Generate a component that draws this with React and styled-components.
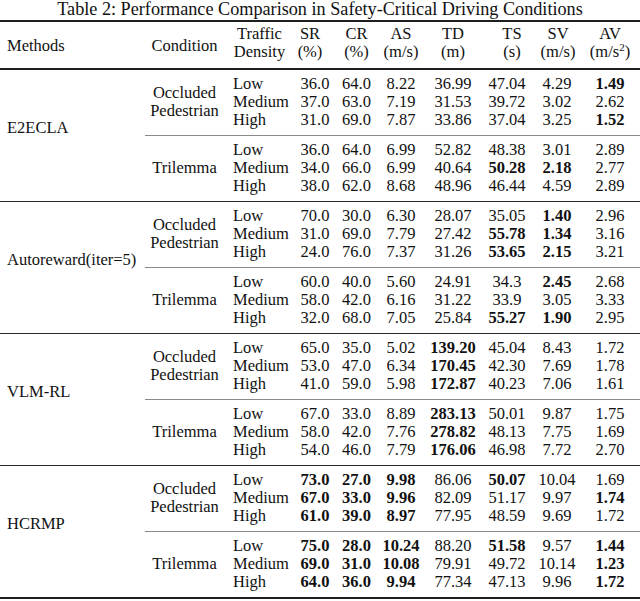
import React from "react";
import styled, { createGlobalStyle } from "styled-components";

const GlobalStyle = createGlobalStyle`
  html, body {
    margin: 0;
    padding: 0;
    background: #ffffff;
  }
  body {
    font-family: "Liberation Serif", "Times New Roman", serif;
    font-size: 16.5px;
    color: #111;
  }
`;

// column widths, shared by the header and the data rows
const METRIC_COLS = "40px 43px 46px 58px 50px 50px 56px";
const ROW_COLS = `71px ${METRIC_COLS}`;

const DATA = [
  {
    method: "E2ECLA",
    groups: [
      {
        condition: ["Occluded", "Pedestrian"],
        rows: [
          ["Low", "36.0", "64.0", "8.22", "36.99", "47.04", "4.29", "*1.49"],
          ["Medium", "37.0", "63.0", "7.19", "31.53", "39.72", "3.02", "2.62"],
          ["High", "31.0", "69.0", "7.87", "33.86", "37.04", "3.25", "*1.52"],
        ],
      },
      {
        condition: ["Trilemma"],
        rows: [
          ["Low", "36.0", "64.0", "6.99", "52.82", "48.38", "3.01", "2.89"],
          ["Medium", "34.0", "66.0", "6.99", "40.64", "*50.28", "*2.18", "2.77"],
          ["High", "38.0", "62.0", "8.68", "48.96", "46.44", "4.59", "2.89"],
        ],
      },
    ],
  },
  {
    method: "Autoreward(iter=5)",
    groups: [
      {
        condition: ["Occluded", "Pedestrian"],
        rows: [
          ["Low", "70.0", "30.0", "6.30", "28.07", "35.05", "*1.40", "2.96"],
          ["Medium", "31.0", "69.0", "7.79", "27.42", "*55.78", "*1.34", "3.16"],
          ["High", "24.0", "76.0", "7.37", "31.26", "*53.65", "*2.15", "3.21"],
        ],
      },
      {
        condition: ["Trilemma"],
        rows: [
          ["Low", "60.0", "40.0", "5.60", "24.91", "34.3", "*2.45", "2.68"],
          ["Medium", "58.0", "42.0", "6.16", "31.22", "33.9", "3.05", "3.33"],
          ["High", "32.0", "68.0", "7.05", "25.84", "*55.27", "*1.90", "2.95"],
        ],
      },
    ],
  },
  {
    method: "VLM-RL",
    groups: [
      {
        condition: ["Occluded", "Pedestrian"],
        rows: [
          ["Low", "65.0", "35.0", "5.02", "*139.20", "45.04", "8.43", "1.72"],
          ["Medium", "53.0", "47.0", "6.34", "*170.45", "42.30", "7.69", "1.78"],
          ["High", "41.0", "59.0", "5.98", "*172.87", "40.23", "7.06", "1.61"],
        ],
      },
      {
        condition: ["Trilemma"],
        rows: [
          ["Low", "67.0", "33.0", "8.89", "*283.13", "50.01", "9.87", "1.75"],
          ["Medium", "58.0", "42.0", "7.76", "*278.82", "48.13", "7.75", "1.69"],
          ["High", "54.0", "46.0", "7.79", "*176.06", "46.98", "7.72", "2.70"],
        ],
      },
    ],
  },
  {
    method: "HCRMP",
    groups: [
      {
        condition: ["Occluded", "Pedestrian"],
        rows: [
          ["Low", "*73.0", "*27.0", "*9.98", "86.06", "*50.07", "10.04", "1.69"],
          ["Medium", "*67.0", "*33.0", "*9.96", "82.09", "51.17", "9.97", "*1.74"],
          ["High", "*61.0", "*39.0", "*8.97", "77.95", "48.59", "9.69", "1.72"],
        ],
      },
      {
        condition: ["Trilemma"],
        rows: [
          ["Low", "*75.0", "*28.0", "*10.24", "88.20", "*51.58", "9.57", "*1.44"],
          ["Medium", "*69.0", "*31.0", "*10.08", "79.91", "49.72", "10.14", "*1.23"],
          ["High", "*64.0", "*36.0", "*9.94", "77.34", "47.13", "9.96", "*1.72"],
        ],
      },
    ],
  },
];

// name, unit, small horizontal nudge of the header text
const HEADERS = [
  ["SR", "(%)", -5],
  ["CR", "(%)", 0],
  ["AS", "(m/s)", 0],
  ["TD", "(m)", 0],
  ["TS", "(s)", 5],
  ["SV", "(m/s)", 1],
  ["AV", <>(m/s<sup>2</sup>)</>, 0],
];

const App = () => {
  return (
    <>
      <GlobalStyle />
      <Page>
        <Caption>
          Table 2: Performance Comparison in Safety-Critical Driving Conditions
        </Caption>
        <Table>
          <HeadRow>
            <HeadCell $single $align="left">Methods</HeadCell>
            <HeadCell $single>Condition</HeadCell>
            <HeadCell>
              Traffic
              <br />
              Density
            </HeadCell>
            {HEADERS.map(([name, unit, shift]) => (
              <HeadCell key={name} $shift={shift}>
                {name}
                <br />
                {unit}
              </HeadCell>
            ))}
          </HeadRow>

          {DATA.map((block, i) => (
            <MethodBlock key={block.method} $last={i === DATA.length - 1}>
              <MethodName>{block.method}</MethodName>
              <Conditions>
                {block.groups.map((group, g) => (
                  <CondGroup key={g} $divider={g > 0}>
                    <CondName>
                      {group.condition.map((line) => (
                        <span key={line}>{line}</span>
                      ))}
                    </CondName>
                    <Rows>
                      {group.rows.map(([density, ...values]) => (
                        <DataRow key={density}>
                          <Density>{density}</Density>
                          {values.map((v, k) => (
                            <Value key={k} $bold={v.startsWith("*")}>
                              {v.replace("*", "")}
                            </Value>
                          ))}
                        </DataRow>
                      ))}
                    </Rows>
                  </CondGroup>
                ))}
              </Conditions>
            </MethodBlock>
          ))}
        </Table>
      </Page>
    </>
  );
};

export default App;

const Page = styled.div`
  width: 640px;
  height: 601px;
  overflow: hidden;
  background: #fff;
`;

const Caption = styled.div`
  height: 18px;
  line-height: 18px;
  margin-bottom: 2px;
  font-size: 18.2px;
  text-align: center;
  white-space: nowrap;
`;

const Table = styled.div`
  border-top: 2px solid #1e1e1e;
`;

const HeadRow = styled.div`
  display: grid;
  grid-template-columns: 145px 79px ${ROW_COLS};
  height: 48px;
  padding-top: 3px;
  box-sizing: border-box;
  border-bottom: 2px solid #1e1e1e;
  line-height: 18.3px;
`;

const HeadCell = styled.div`
  text-align: ${({ $align }) => $align || "center"};
  padding-top: ${({ $single }) => ($single ? "12px" : "0")};
  padding-left: ${({ $align }) => ($align === "left" ? "7px" : "0")};
  transform: translateX(${({ $shift }) => $shift || 0}px);
  white-space: nowrap;

  sup {
    font-size: 11px;
    line-height: 0;
    vertical-align: 6px;
  }
`;

const MethodBlock = styled.div`
  display: flex;
  border-bottom: ${({ $last }) =>
    $last ? "2px solid #1e1e1e" : "1px solid #2a2a2a"};
`;

const MethodName = styled.div`
  width: 145px;
  flex-shrink: 0;
  display: flex;
  align-items: center;
  padding: 0 0 16px 7px;
  box-sizing: border-box;
  white-space: nowrap;
`;

const Conditions = styled.div`
  flex: 1;
  display: flex;
  flex-direction: column;
`;

const CondGroup = styled.div`
  display: flex;
  padding: 5px 0 6px;
  border-top: ${({ $divider }) => ($divider ? "1px solid #8a8a8a" : "none")};
`;

const CondName = styled.div`
  width: 79px;
  flex-shrink: 0;
  display: flex;
  flex-direction: column;
  justify-content: center;
  align-items: center;
  line-height: 18.5px;
  white-space: nowrap;
`;

const Rows = styled.div`
  display: flex;
  flex-direction: column;
`;

const DataRow = styled.div`
  display: grid;
  grid-template-columns: ${ROW_COLS};
  height: 18px;
  line-height: 18px;
`;

const Density = styled.div`
  padding-left: 9px;
`;

const Value = styled.div`
  text-align: center;
  white-space: nowrap;
  font-weight: ${({ $bold }) => ($bold ? 700 : 400)};
`;
